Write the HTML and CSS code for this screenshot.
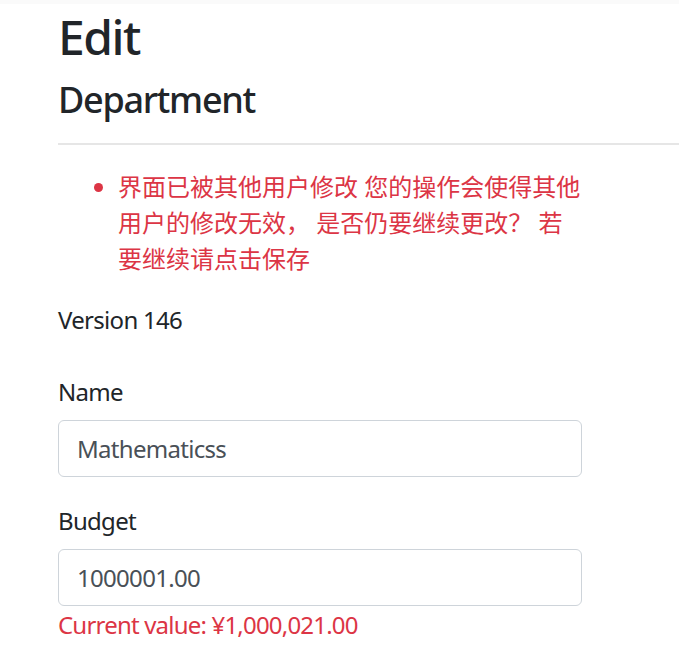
FILE: index.html
```html
<!DOCTYPE html>
<html lang="zh">
<head>
<meta charset="utf-8">
<title>Edit - Department</title>
<link rel="stylesheet" href="styles.css">
</head>
<body>
<div class="topbar"></div>
<main class="main">
  <h1 class="title">Edit</h1>
  <h2 class="subtitle">Department</h2>
  <hr class="divider">
  <form class="form">
    <ul class="errors">
      <li>界面已被其他用户修改 您的操作会使得其他用户的修改无效， 是否仍要继续更改？ 若要继续请点击保存</li>
    </ul>
    <p class="version">Version 146</p>
    <div class="group">
      <label class="label" for="name">Name</label>
      <input class="control" id="name" type="text" value="Mathematicss">
    </div>
    <div class="group">
      <label class="label" for="budget">Budget</label>
      <input class="control" id="budget" type="text" value="1000001.00">
      <span class="danger">Current value: ¥1,000,021.00</span>
    </div>
  </form>
</main>
</body>
</html>
```
FILE: styles.css
```css
html, body {
  margin: 0;
  padding: 0;
  background: #fff;
}
body {
  font-family: "Noto Sans", "Noto Sans CJK SC", sans-serif;
  font-size: 24px;
  line-height: 1.5;
  color: #212529;
}
.topbar {
  height: 4px;
  background: #fafafa;
}
.main {
  padding-left: 58px;
}
.title {
  font-size: 48px;
  font-weight: 500;
  letter-spacing: -1.5px;
  line-height: 1.2;
  margin: 4px 0 0 0;
}
.subtitle {
  font-size: 36px;
  font-weight: 500;
  letter-spacing: -1.3px;
  line-height: 1.2;
  margin: 12px 0 0 0;
}
.divider {
  border: 0;
  border-top: 2px solid #e6e6e6;
  margin: 22px 0 0 0;
}
.form {
  width: 524px;
}
.errors {
  color: #dc3545;
  margin: 24px 0 25px 0;
  padding-left: 60px;
}
.version {
  margin: 0 0 36px 0;
  letter-spacing: -0.7px;
}
.group {
  display: flex;
  flex-direction: column;
  margin-bottom: 26px;
}
.label {
  margin-bottom: 10px;
  letter-spacing: -0.7px;
}
.control {
  font-family: inherit;
  font-size: 24px;
  letter-spacing: -0.7px;
  line-height: 36px;
  color: #495057;
  padding: 9px 18px;
  border: 1px solid #ced4da;
  border-radius: 6px;
  background: #fff;
  box-sizing: border-box;
  width: 100%;
  height: 57px;
  outline: none;
}
.danger {
  color: #dc3545;
  margin-top: 1px;
  letter-spacing: -0.8px;
}
```
